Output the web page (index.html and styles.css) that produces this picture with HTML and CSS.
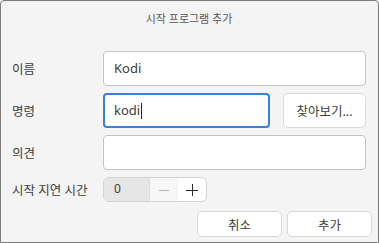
FILE: index.html
```html
<!DOCTYPE html>
<html lang="ko">
<head>
    <meta charset="UTF-8">
    <meta name="viewport" content="width=device-width, initial-scale=1.0">
    <title>시작 프로그램 추가</title>
    <link rel="stylesheet" href="styles.css">
</head>
<body>
    <div class="dialog">
        <div class="title">시작 프로그램 추가</div>
        <div class="form">
            <div class="row">
                <label class="label">이름</label>
                <div class="entry">Kodi</div>
            </div>
            <div class="row">
                <label class="label">명령</label>
                <div class="entry focus">kodi<span class="caret"></span></div>
                <button class="btn browse">찾아보기...</button>
            </div>
            <div class="row">
                <label class="label">의견</label>
                <div class="entry"></div>
            </div>
            <div class="row short">
                <label class="label">시작 지연 시간</label>
                <div class="spin">
                    <span class="spin-value">0</span>
                    <span class="spin-btn minus">
                        <svg width="12" height="12" viewBox="0 0 12 12"><line x1="1" y1="6.5" x2="11" y2="6.5" stroke="#b4b4b4" stroke-width="1"/></svg>
                    </span>
                    <span class="spin-btn plus">
                        <svg width="12" height="12" viewBox="0 0 12 12"><line x1="0" y1="6.5" x2="12" y2="6.5" stroke="#2a2a2a" stroke-width="1"/><line x1="6.5" y1="0" x2="6.5" y2="12" stroke="#2a2a2a" stroke-width="1"/></svg>
                    </span>
                </div>
            </div>
        </div>
        <div class="actions">
            <button class="btn action">취소</button>
            <button class="btn action">추가</button>
        </div>
    </div>
</body>
</html>
```

FILE: styles.css
```css
body {
    margin: 0;
    padding: 0;
    background-color: #ffffff;
    font-family: "Noto Sans", "Noto Sans CJK KR", sans-serif;
}
.dialog {
    box-sizing: border-box;
    width: 379px;
    height: 243px;
    border: 1px solid #7c7c7c;
    border-radius: 4px 4px 0 0;
    background-color: #f4f4f4;
    padding: 0 12px 0 11px;
    color: #3c3c3c;
}
.title {
    text-align: center;
    font-size: 11px;
    line-height: 16px;
    padding-top: 10px;
    height: 40px;
    box-sizing: border-box;
    color: #595959;
}
.form {
    display: flex;
    flex-direction: column;
    gap: 7px;
    padding-top: 10px;
}
.row {
    display: flex;
    align-items: center;
    height: 35px;
    gap: 13px;
}
.row.short {
    height: 25px;
}
.label {
    width: 91px;
    flex: none;
    font-size: 12.5px;
    margin-right: -13px;
}
.entry {
    box-sizing: border-box;
    flex: 1;
    height: 35px;
    background: #ffffff;
    border: 1px solid #c4c4c4;
    border-radius: 4px;
    padding: 0 10px;
    font-size: 13px;
    line-height: 33px;
    display: flex;
    align-items: center;
}
.entry.focus {
    border: 2px solid #3a80d9;
    padding: 0 9px;
}
.caret {
    display: inline-block;
    width: 1px;
    height: 16px;
    background: #222222;
    margin-left: 1px;
}
.btn {
    box-sizing: border-box;
    background: #ffffff;
    border: 1px solid #d9d9d9;
    border-radius: 5px;
    font-family: inherit;
    font-size: 12.5px;
    color: #3c3c3c;
    padding: 0;
}
.browse {
    width: 83px;
    height: 35px;
}
.spin {
    box-sizing: border-box;
    display: flex;
    width: 104px;
    height: 25px;
    border: 1px solid #d4d4d4;
    border-radius: 6px;
    overflow: hidden;
    font-size: 12px;
}
.spin-value {
    width: 46px;
    background: #e6e6e6;
    padding-left: 10px;
    box-sizing: border-box;
    line-height: 21px;
    border-right: 1px solid #dddddd;
}
.spin-btn {
    flex: 1;
    display: flex;
    align-items: center;
    justify-content: center;
}
.spin-btn.minus {
    background: #f7f7f7;
}
.spin-btn.plus {
    background: #ffffff;
}
.actions {
    display: flex;
    justify-content: flex-end;
    gap: 5px;
    margin-top: 9px;
    margin-right: -6px;
}
.action {
    width: 85px;
    height: 26px;
}
```
